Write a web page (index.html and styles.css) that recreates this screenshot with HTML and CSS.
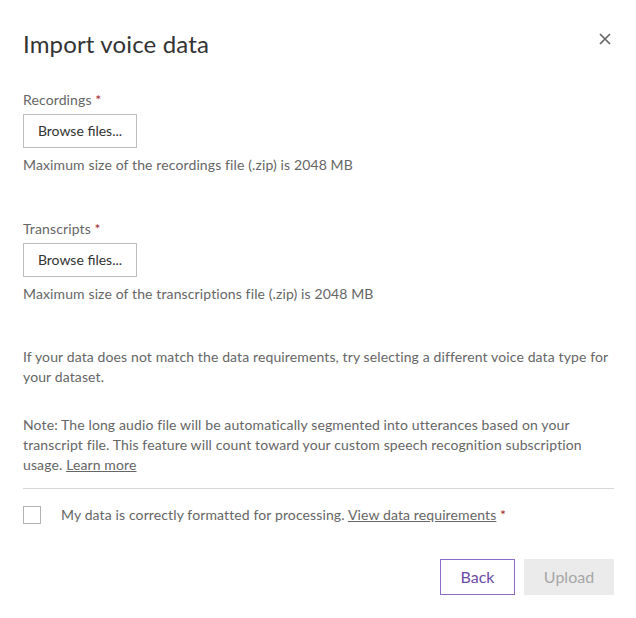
FILE: index.html
```html
<!DOCTYPE html>
<html lang="en">
<head>
<meta charset="utf-8">
<title>Import voice data</title>
<link rel="stylesheet" href="styles.css">
</head>
<body>
<div class="dialog">
  <div class="header">
    <h1 class="title">Import voice data</h1>
    <button class="close" aria-label="Close">
      <svg width="12" height="12" viewBox="0 0 12 12"><path d="M1 1L11 11M11 1L1 11" stroke="#666" stroke-width="1.7" fill="none"/></svg>
    </button>
  </div>

  <div class="field first">
    <div class="label">Recordings <span class="req">*</span></div>
    <button class="browse">Browse files...</button>
    <div class="hint">Maximum size of the recordings file (.zip) is 2048 MB</div>
  </div>

  <div class="field">
    <div class="label">Transcripts <span class="req">*</span></div>
    <button class="browse">Browse files...</button>
    <div class="hint">Maximum size of the transcriptions file (.zip) is 2048 MB</div>
  </div>

  <p class="para p1">If your data does not match the data requirements, try selecting a different voice data type for your dataset.</p>
  <p class="para p2">Note: The long audio file will be automatically segmented into utterances based on your transcript file. This feature will count toward your custom speech recognition subscription usage. <a class="link" href="#">Learn more</a></p>

  <div class="sep"></div>

  <label class="check">
    <span class="box"></span>
    <span class="check-text">My data is correctly formatted for processing. <a class="link" href="#">View data requirements</a> <span class="req">*</span></span>
  </label>

  <div class="actions">
    <button class="btn back">Back</button>
    <button class="btn upload" disabled>Upload</button>
  </div>
</div>
</body>
</html>
```
FILE: styles.css
```css
* { box-sizing: border-box; }
html, body { margin: 0; padding: 0; background: #fff; }
body {
  font-family: Lato, "Noto Sans", sans-serif;
  font-size: 14px;
  line-height: 20px;
  letter-spacing: 0.12px;
  color: #666;
}
.dialog {
  width: 636px;
  padding: 28px 22px 0 23px;
}
.header {
  display: flex;
  justify-content: space-between;
  align-items: flex-start;
}
.title {
  margin: 0;
  font-size: 24px;
  line-height: 32px;
  font-weight: 400;
  letter-spacing: 0.15px;
  color: #333;
}
.close {
  border: 0;
  background: none;
  padding: 0;
  margin: 5px 3px 0 0;
  width: 12px;
  height: 12px;
  display: flex;
}
.field.first { margin-top: 30px; }
.field { margin-top: 44px; }
.label { color: #666; }
.req { color: #a4262c; }
.browse {
  display: block;
  margin-top: 4px;
  height: 34px;
  width: 114px;
  border: 1px solid #bdbdbd;
  background: #fff;
  font: inherit;
  color: #333;
  padding: 0;
}
.hint { margin-top: 7px; }
.para { margin: 0; }
.p1 { margin-top: 43px; }
.p2 { margin-top: 28px; }
.link { color: #666; text-decoration: underline; }
.sep {
  margin-top: 13px;
  height: 1px;
  background: #d6d6d6;
}
.check {
  display: flex;
  align-items: center;
  margin-top: 16px;
  height: 20px;
}
.box {
  width: 18px;
  height: 18px;
  border: 1px solid #b3b3b3;
  flex: none;
}
.check-text { margin-left: 20px; }
.actions {
  display: flex;
  justify-content: flex-end;
  gap: 9px;
  margin-top: 34px;
}
.btn {
  height: 36px;
  font: inherit;
  font-size: 16px;
  padding: 0;
}
.back {
  width: 75px;
  border: 1px solid #8a6bc8;
  background: #fff;
  color: #6c4ba8;
}
.upload {
  width: 90px;
  border: 0;
  background: #ebebeb;
  color: #a6a6a6;
}
```
